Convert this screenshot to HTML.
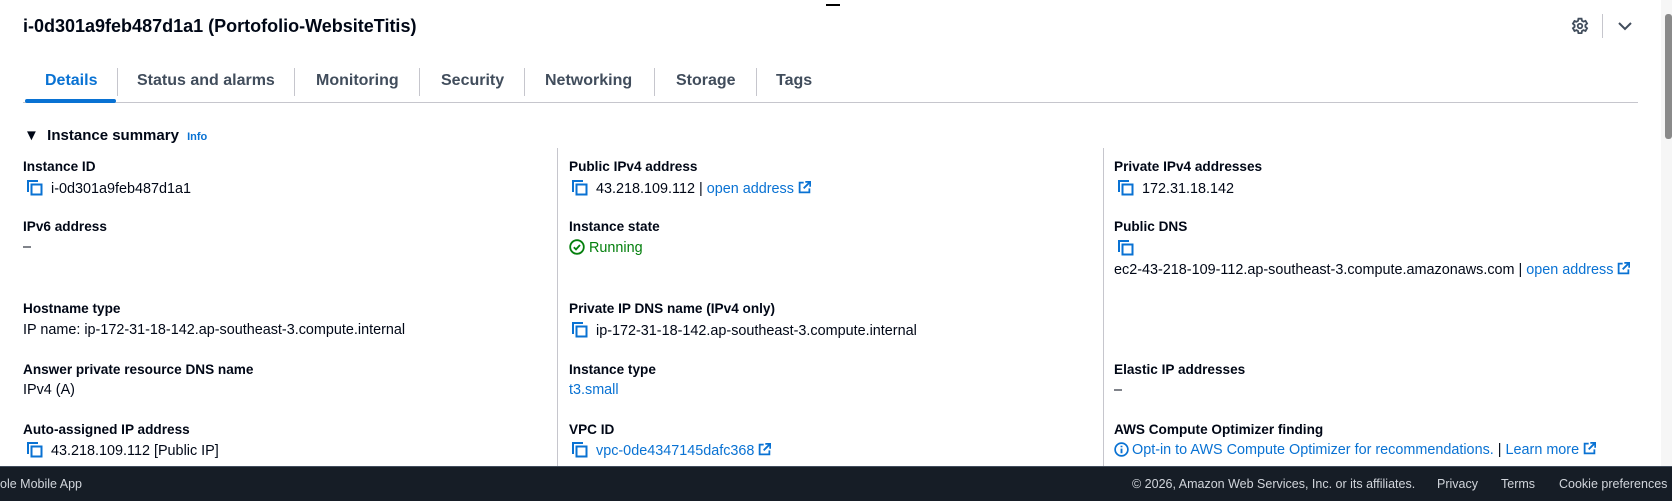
<!DOCTYPE html>
<html><head><meta charset="utf-8"><style>
*{margin:0;padding:0;box-sizing:border-box}
body{width:1672px;height:501px;overflow:hidden;background:#fff;font-family:"Liberation Sans",Arial,sans-serif;color:#000716;position:relative;font-size:14px}
.a{position:absolute;white-space:nowrap}
.t{font-size:18px;font-weight:bold;left:23px;top:16px}
.tab{font-size:16px;font-weight:bold;color:#414d5c;top:72px}
.dv{position:absolute;width:1px;background:#c6c6cd}
.l{font-weight:bold;font-size:13.6px}
.v{font-size:14.4px}
.lk{color:#0972d3}
.cp{display:inline-block;vertical-align:-3px;margin-right:8px}
.ft{color:#d1d5db;font-size:12.5px;top:477px}
</style></head><body>
<div class="a" style="left:826px;top:4px;width:14px;height:2px;background:#000"></div>
<div class="a t">i-0d301a9feb487d1a1 (Portofolio-WebsiteTitis)</div>
<svg class="a" style="left:1571px;top:17px" width="18" height="18" viewBox="0 0 16 16" fill="none" stroke="#414d5c" stroke-width="1.6"><path d="M6.6 1.5h2.8l.4 1.9 1.3.7 1.8-.7 1.4 2.4-1.5 1.3v1.6l1.5 1.3-1.4 2.4-1.8-.7-1.3.7-.4 1.9H6.6l-.4-1.9-1.3-.7-1.8.7-1.4-2.4 1.5-1.3V7.2L1.7 5.9l1.4-2.4 1.8.7 1.3-.7z"/><circle cx="8" cy="8" r="2"/></svg>
<div class="dv" style="left:1602px;top:14px;height:24px"></div>
<svg class="a" style="left:1617px;top:20px" width="16" height="12" viewBox="0 0 16 12" fill="none" stroke="#414d5c" stroke-width="2"><path d="M2 3l6 6 6-6"/></svg>

<div class="a tab" style="left:45px;color:#0972d3">Details</div>
<div class="dv" style="left:117px;top:68px;height:28px"></div>
<div class="a tab" style="left:137px">Status and alarms</div>
<div class="dv" style="left:294px;top:68px;height:28px"></div>
<div class="a tab" style="left:316px">Monitoring</div>
<div class="dv" style="left:419px;top:68px;height:28px"></div>
<div class="a tab" style="left:441px">Security</div>
<div class="dv" style="left:524px;top:68px;height:28px"></div>
<div class="a tab" style="left:545px">Networking</div>
<div class="dv" style="left:654px;top:68px;height:28px"></div>
<div class="a tab" style="left:676px">Storage</div>
<div class="dv" style="left:756px;top:68px;height:28px"></div>
<div class="a tab" style="left:776px">Tags</div>
<div class="a" style="left:23px;top:102px;width:1615px;height:1px;background:#c6c6cd"></div>
<div class="a" style="left:25px;top:99px;width:91px;height:4px;background:#0972d3;border-radius:2px"></div>

<div class="a" style="left:24px;top:127px;font-size:15px;font-weight:bold">▼&nbsp; Instance summary <span style="font-size:11px;color:#0972d3;margin-left:4px">Info</span></div>

<div class="dv" style="left:557px;top:148px;height:318px"></div>
<div class="dv" style="left:1103px;top:148px;height:318px"></div>

<svg width="0" height="0" style="position:absolute"><defs><g id="c"><path d="M1 12V1h10" fill="none" stroke="#0972d3" stroke-width="2"/><rect x="4.5" y="4.5" width="10" height="10" fill="none" stroke="#0972d3" stroke-width="2"/></g><g id="e"><path d="M7 2H2v12h12V9" fill="none" stroke="#0972d3" stroke-width="2.2"/><path d="M9 1h6v6M15 1L7 9" fill="none" stroke="#0972d3" stroke-width="2.2"/></g></defs></svg>

<div class="a l" style="left:23px;top:159px">Instance ID</div>
<div class="a v" style="left:27px;top:180px"><svg class="cp" width="16" height="16"><use href="#c"/></svg>i-0d301a9feb487d1a1</div>
<div class="a l" style="left:23px;top:219px">IPv6 address</div>
<div class="a v" style="left:23px;top:239px">–</div>
<div class="a l" style="left:23px;top:301px">Hostname type</div>
<div class="a v" style="left:23px;top:322px">IP name: ip-172-31-18-142.ap-southeast-3.compute.internal</div>
<div class="a l" style="left:23px;top:362px">Answer private resource DNS name</div>
<div class="a v" style="left:23px;top:382px">IPv4 (A)</div>
<div class="a l" style="left:23px;top:422px">Auto-assigned IP address</div>
<div class="a v" style="left:27px;top:442px"><svg class="cp" width="16" height="16"><use href="#c"/></svg>43.218.109.112 [Public IP]</div>

<div class="a l" style="left:569px;top:159px">Public IPv4 address</div>
<div class="a v" style="left:572px;top:180px"><svg class="cp" width="16" height="16"><use href="#c"/></svg>43.218.109.112 | <span class="lk">open address <svg width="13" height="13" viewBox="0 0 16 16" style="vertical-align:-1px"><use href="#e"/></svg></span></div>
<div class="a l" style="left:569px;top:219px">Instance state</div>
<div class="a v" style="left:569px;top:239px;color:#037f0c"><svg width="16" height="16" viewBox="0 0 16 16" style="vertical-align:-3px;margin-right:4px"><circle cx="8" cy="8" r="6.8" fill="none" stroke="#037f0c" stroke-width="1.8"/><path d="M4.8 8.2l2.2 2.2 4-4.4" fill="none" stroke="#037f0c" stroke-width="1.8"/></svg>Running</div>
<div class="a l" style="left:569px;top:301px">Private IP DNS name (IPv4 only)</div>
<div class="a v" style="left:572px;top:322px"><svg class="cp" width="16" height="16"><use href="#c"/></svg>ip-172-31-18-142.ap-southeast-3.compute.internal</div>
<div class="a l" style="left:569px;top:362px">Instance type</div>
<div class="a v lk" style="left:569px;top:382px">t3.small</div>
<div class="a l" style="left:569px;top:422px">VPC ID</div>
<div class="a v" style="left:572px;top:442px"><svg class="cp" width="16" height="16"><use href="#c"/></svg><span class="lk">vpc-0de4347145dafc368 <svg width="13" height="13" viewBox="0 0 16 16" style="vertical-align:-1px"><use href="#e"/></svg></span></div>

<div class="a l" style="left:1114px;top:159px">Private IPv4 addresses</div>
<div class="a v" style="left:1118px;top:180px"><svg class="cp" width="16" height="16"><use href="#c"/></svg>172.31.18.142</div>
<div class="a l" style="left:1114px;top:219px">Public DNS</div>
<div class="a v" style="left:1118px;top:240px"><svg class="cp" width="16" height="16"><use href="#c"/></svg></div>
<div class="a v" style="left:1114px;top:262px">ec2-43-218-109-112.ap-southeast-3.compute.amazonaws.com | <span class="lk">open address <svg width="13" height="13" viewBox="0 0 16 16" style="vertical-align:-1px"><use href="#e"/></svg></span></div>
<div class="a l" style="left:1114px;top:362px">Elastic IP addresses</div>
<div class="a v" style="left:1114px;top:382px">–</div>
<div class="a l" style="left:1114px;top:422px">AWS Compute Optimizer finding</div>
<div class="a v" style="left:1114px;top:442px"><span class="lk"><svg width="15" height="15" viewBox="0 0 16 16" style="vertical-align:-3px;margin-right:3px"><circle cx="8" cy="8" r="6.8" fill="none" stroke="#0972d3" stroke-width="1.8"/><path d="M8 7v5M8 4v1.6" stroke="#0972d3" stroke-width="2"/></svg>Opt-in to AWS Compute Optimizer for recommendations.</span> | <span class="lk">Learn more <svg width="13" height="13" viewBox="0 0 16 16" style="vertical-align:-1px"><use href="#e"/></svg></span></div>

<div class="a" style="left:1661px;top:0;width:11px;height:466px;background:#f6f6f6"></div>
<div class="a" style="left:1665px;top:14px;width:7px;height:125px;background:#8a8a8a;border-radius:3px"></div>

<div class="a" style="left:0;top:466px;width:1672px;height:35px;background:#161d26;border-top:1px solid #414d5c"></div>
<div class="a ft" style="left:0">ole Mobile App</div>
<div class="a ft" style="left:1132px">© 2026, Amazon Web Services, Inc. or its affiliates.</div>
<div class="a ft" style="left:1437px">Privacy</div>
<div class="a ft" style="left:1501px">Terms</div>
<div class="a ft" style="left:1559px">Cookie preferences</div>
</body></html>
